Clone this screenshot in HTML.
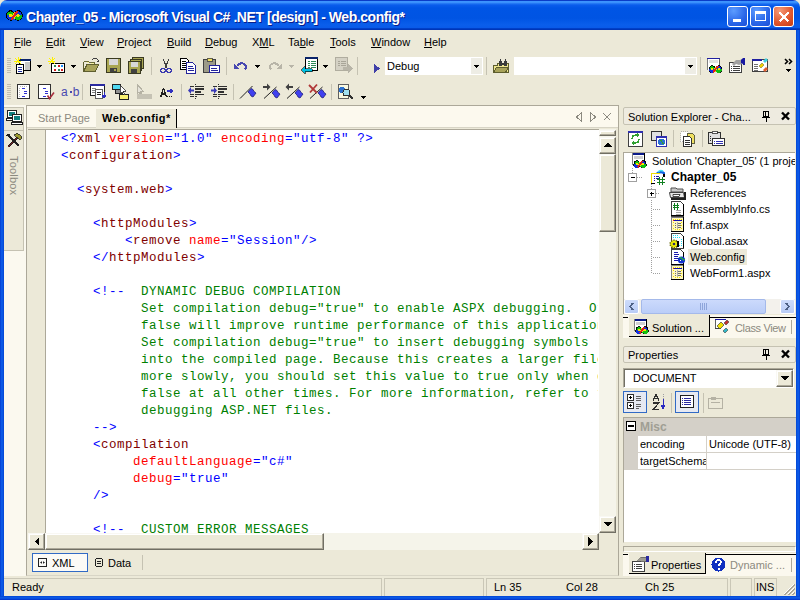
<!DOCTYPE html>
<html><head><meta charset="utf-8">
<style>
*{margin:0;padding:0;box-sizing:border-box}
html,body{width:800px;height:600px;overflow:hidden;background:#ECE9D8;font-family:"Liberation Sans",sans-serif;font-size:11px;color:#000}
.a{position:absolute}
svg *{shape-rendering:crispEdges}
.t{position:absolute;white-space:nowrap;line-height:13px}
u{text-decoration:underline;text-underline-offset:1px;text-decoration-thickness:1px}
#title{left:0;top:0;width:800px;height:30px;border-radius:7px 7px 0 0;background:linear-gradient(#0A3CC8 0px,#0A3CC8 1px,#3D95FF 1px,#3A90FC 2.5px,#2478F4 3.5px,#0A5CEC 5px,#0055E5 8px,#0054E3 18px,#0A5EEB 25px,#0A5AE8 28px,#0040C8 28.5px,#0030B0 30px)}
.frameL{left:0;top:30px;width:4px;height:570px;background:linear-gradient(90deg,#0030C8 0,#0B5AE8 1px,#0A56E2 3px,#0040D0 4px)}
.frameR{left:796px;top:30px;width:4px;height:570px;background:linear-gradient(90deg,#0040D0 0,#0A56E2 1px,#0B5AE8 3px,#0030C8 4px)}
.frameB{left:0;top:596px;width:800px;height:4px;background:linear-gradient(#0040D0 0,#0A56E2 1px,#0B5AE8 2px,#0030C8 4px)}
.tb{position:absolute;top:6px;width:21px;height:21px;border:1px solid #fff;border-radius:3px}
.code{font-family:"Liberation Mono",monospace;font-size:12.5px;letter-spacing:0.5px;line-height:17px;white-space:pre;color:#000}
.tg{color:#800000}.bl{color:#0000FF}.at{color:#FF0000}.cm{color:#008000}
.grip{position:absolute;width:4px;background:repeating-linear-gradient(#C1BEB0 0 1px,transparent 1px 2px)}
.sep{position:absolute;width:1px;background:#C5C2B2}
.btn3d{position:absolute;background:#ECE9D8;border:1px solid;border-color:#F9F8F3 #716F64 #716F64 #F9F8F3;box-shadow:inset -1px -1px 0 #ACA899,inset 1px 1px 0 #fff}
</style></head><body>

<svg width="0" height="0" style="position:absolute"><defs>
<g id="vslogo" style="shape-rendering:auto">
<ellipse cx="3.8" cy="4.2" rx="3.3" ry="3.6" fill="#10C010" stroke="#000" stroke-width="0.9"/><path d="M0.5 4.2a3.3 3.6 0 0 0 6.6 0z" fill="#1030E0"/>
<ellipse cx="10.2" cy="4.2" rx="3.3" ry="3.6" fill="#1030E0" stroke="#000" stroke-width="0.9"/><path d="M6.9 4.2a3.3 3.6 0 0 0 6.6 0z" fill="#10C010"/>
<path d="M5 4.2l2-2.5 2 2.5-2 2.5z" fill="#F8E000"/><circle cx="3.8" cy="4.2" r="1.2" fill="#F8E000"/><circle cx="10.2" cy="4.2" r="1.2" fill="#F8E000"/>
<path d="M4.5 7.5l5-6.5" stroke="#E02020" stroke-width="1.8"/>
</g></defs></svg>
<!-- window frame -->
<div class="a" id="title"></div>
<svg class="a" style="left:6px;top:9px" width="17" height="13" viewBox="0 0 17 13"><use href="#vslogo" transform="translate(0,1) scale(1.2,1.3)"/></svg>
<div class="t" style="left:26px;top:10px;font-size:14px;line-height:15px;font-weight:bold;color:#fff;letter-spacing:-0.45px;text-shadow:1px 1px 0 #0A1E8C">Chapter_05 - Microsoft Visual C# .NET [design] - Web.config*</div>
<div class="tb" style="left:727px;background:radial-gradient(circle at 30% 20%,#5C9CFF,#2A66E8 60%,#1B4FD8)"><div class="a" style="left:5px;top:12px;width:8px;height:3px;background:#fff"></div></div>
<div class="tb" style="left:750px;background:radial-gradient(circle at 30% 20%,#5C9CFF,#2A66E8 60%,#1B4FD8)"><div class="a" style="left:4px;top:4px;width:11px;height:10px;border:1px solid #fff;border-top-width:3px"></div></div>
<div class="tb" style="left:773px;background:radial-gradient(circle at 30% 20%,#F59A78,#E0552C 60%,#C63C12)"><svg class="a" style="left:4px;top:4px" width="12" height="12"><path d="M1.5 1.5L10.5 10.5M10.5 1.5L1.5 10.5" stroke="#fff" stroke-width="2"/></svg></div>

<div class="a frameL"></div><div class="a frameR"></div><div class="a frameB"></div>


<!-- menu -->
<div class="t" style="left:14px;top:36px"><u>F</u>ile</div>
<div class="t" style="left:46px;top:36px"><u>E</u>dit</div>
<div class="t" style="left:80px;top:36px"><u>V</u>iew</div>
<div class="t" style="left:117px;top:36px"><u>P</u>roject</div>
<div class="t" style="left:167px;top:36px"><u>B</u>uild</div>
<div class="t" style="left:205px;top:36px"><u>D</u>ebug</div>
<div class="t" style="left:252px;top:36px">X<u>M</u>L</div>
<div class="t" style="left:288px;top:36px">Ta<u>b</u>le</div>
<div class="t" style="left:330px;top:36px"><u>T</u>ools</div>
<div class="t" style="left:371px;top:36px"><u>W</u>indow</div>
<div class="t" style="left:424px;top:36px"><u>H</u>elp</div>

<!-- toolbar 1 -->
<div class="grip" style="left:7px;top:58px;height:15px"></div>
<svg class="a" style="left:14px;top:57px" width="18" height="18" viewBox="0 0 18 18">
<rect x="5.5" y="2.5" width="11" height="11" fill="#fff" stroke="#000"/><rect x="5" y="2" width="12" height="2" fill="#0A246A"/><rect x="11" y="5" width="5" height="8" fill="#C8C8C8"/>
<rect x="2.5" y="7.5" width="7" height="9" fill="#fff" stroke="#000"/><path d="M4 10h4M4 12h4M4 14h4" stroke="#2030A0"/>
<path d="M1 1l6 6M4 0v6M0 4h7M1 7l6-6" stroke="#FFF200" stroke-width="1"/>
</svg>
<svg class="a" style="left:37px;top:65px" width="6" height="3"><path d="M0 0h5l-2.5 3z" fill="#000"/></svg>
<svg class="a" style="left:48px;top:57px" width="18" height="18" viewBox="0 0 18 18">
<rect x="3.5" y="6.5" width="13" height="9" fill="#fff" stroke="#000"/><rect x="4" y="15" width="13" height="1" fill="#000"/>
<rect x="6" y="8" width="2" height="2" fill="#2E8B57"/><rect x="10" y="8" width="2" height="2" fill="#D02020"/><rect x="13" y="8" width="2" height="2" fill="#1E90FF"/>
<rect x="6" y="12" width="2" height="2" fill="#D02020"/><rect x="10" y="12" width="2" height="2" fill="#2E8B57"/><rect x="13" y="12" width="2" height="2" fill="#D02020"/>
<path d="M1 1l6 6M4 0v6M0 4h7M1 7l6-6" stroke="#FFF200" stroke-width="1"/>
</svg>
<svg class="a" style="left:71px;top:65px" width="6" height="3"><path d="M0 0h5l-2.5 3z" fill="#000"/></svg>
<svg class="a" style="left:82px;top:57px" width="18" height="16" viewBox="0 0 18 16">
<path d="M1.5 4.5h5l1 1h5v2" fill="#F6F0A0" stroke="#6B6B3A"/><path d="M1.5 4.5v10h12l3-7h-12l-3 7" fill="#EDE58E" stroke="#5E5E2E"/><path d="M2 14.5l3-7h11.5l-3 7z" fill="#A8A35A" stroke="#5E5E2E"/>
<path d="M10 3q3-3 6 0l0 2" stroke="#404040" fill="none"/><path d="M14.5 4h3l-1.5 2z" fill="#404040"/>
</svg>
<svg class="a" style="left:106px;top:58px" width="16" height="16" viewBox="0 0 16 16">
<rect x="0.5" y="0.5" width="14" height="14" fill="#A9A652" stroke="#3A3A20"/><rect x="3" y="1" width="9" height="6" fill="#D8D8D8"/><rect x="4" y="10" width="7" height="4" fill="#404040"/><rect x="8" y="11" width="2" height="2" fill="#A9A652"/>
</svg>
<svg class="a" style="left:128px;top:57px" width="17" height="17" viewBox="0 0 17 17">
<rect x="4.5" y="0.5" width="11" height="11" fill="#A9A652" stroke="#3A3A20"/><rect x="2.5" y="2.5" width="11" height="11" fill="#A9A652" stroke="#3A3A20"/>
<rect x="0.5" y="4.5" width="12" height="12" fill="#A9A652" stroke="#3A3A20"/><rect x="3" y="5" width="7" height="5" fill="#D8D8D8"/><rect x="3" y="12" width="6" height="4" fill="#404040"/>
</svg>
<div class="sep" style="left:151px;top:57px;height:18px"></div>
<svg class="a" style="left:160px;top:58px" width="12" height="16" viewBox="0 0 12 16">
<path d="M3 1l4 9M9 1l-4 9" stroke="#404040"/><circle cx="3" cy="12.5" r="2.2" fill="none" stroke="#3A3AB0" stroke-width="1.3"/><circle cx="9" cy="12.5" r="2.2" fill="none" stroke="#3A3AB0" stroke-width="1.3"/>
</svg>
<svg class="a" style="left:180px;top:58px" width="17" height="16" viewBox="0 0 17 16">
<path d="M0.5 0.5h6l2 2v9h-8z" fill="#fff" stroke="#000"/><path d="M2 3h4M2 5h5M2 7h5M2 9h5" stroke="#000"/>
<path d="M6.5 4.5h6l3 3v8h-9z" fill="#fff" stroke="#24249A"/><path d="M8 8h5M8 10h6M8 12h6" stroke="#24249A"/>
</svg>
<svg class="a" style="left:203px;top:57px" width="18" height="17" viewBox="0 0 18 17">
<rect x="0.5" y="2.5" width="12" height="13" rx="1" fill="#9C9A88" stroke="#404040"/><rect x="4" y="1" width="5" height="3" fill="#F0E060" stroke="#404040" stroke-width="0.8"/>
<rect x="6.5" y="8.5" width="10" height="7" fill="#fff" stroke="#24249A"/><path d="M8 11h6M8 13h7" stroke="#24249A"/>
</svg>
<div class="sep" style="left:226px;top:57px;height:18px"></div>
<svg class="a" style="left:234px;top:61px" width="14" height="10" viewBox="0 0 14 10">
<path d="M3 4.5q4-4 8-1q2 2 0 5" stroke="#4848B0" stroke-width="2" fill="none"/><path d="M0 2v6h5z" fill="#4848B0"/>
</svg>
<svg class="a" style="left:255px;top:65px" width="6" height="3"><path d="M0 0h5l-2.5 3z" fill="#000"/></svg>
<svg class="a" style="left:268px;top:61px" width="14" height="10" viewBox="0 0 14 10">
<path d="M11 4.5q-4-4-8-1q-2 2 0 5" stroke="#B8B5A8" stroke-width="2" fill="none"/><path d="M14 2v6h-5z" fill="#B8B5A8"/>
</svg>
<svg class="a" style="left:289px;top:65px" width="6" height="3"><path d="M0 0h5l-2.5 3z" fill="#B8B5A8"/></svg>
<svg class="a" style="left:300px;top:57px" width="18" height="17" viewBox="0 0 18 17">
<rect x="5.5" y="0.5" width="12" height="13" fill="#fff" stroke="#000"/><rect x="5" y="0" width="13" height="2" fill="#0A246A"/>
<path d="M8 4h2M11 4h5M8 6h2M11 6h5M8 8h2M11 8h5M8 10h2M11 10h5" stroke="#2E8B57"/>
<path d="M1 13l4-4v2.5h7v3h-7v2.5z" fill="#00C0E0" stroke="#000" stroke-width="0.6"/>
</svg>
<svg class="a" style="left:323px;top:65px" width="6" height="3"><path d="M0 0h5l-2.5 3z" fill="#000"/></svg>
<svg class="a" style="left:335px;top:57px" width="18" height="17" viewBox="0 0 18 17">
<rect x="0.5" y="0.5" width="12" height="13" fill="#D4D1C4" stroke="#B0AD9F"/><path d="M3 4h2M6 4h5M3 6h2M6 6h5M3 8h2M6 8h5" stroke="#A8A598"/>
<path d="M8 10h5v-3l5 4.5l-5 4.5v-3h-5z" fill="#B8B5A8"/>
</svg>
<div class="sep" style="left:357px;top:57px;height:18px"></div>
<svg class="a" style="left:374px;top:64px" width="6" height="10"><path d="M0 0l6 4.5l-6 4.5z" fill="#4040A8"/></svg>
<div class="a" style="left:385px;top:57px;width:98px;height:18px;background:#fff"></div>
<div class="a" style="left:471px;top:58px;width:11px;height:16px;background:#EEEDE5"></div>
<svg class="a" style="left:474px;top:65px" width="6" height="3"><path d="M0 0h5l-2.5 3z" fill="#000"/></svg>
<div class="t" style="left:387px;top:60px">Debug</div>
<div class="sep" style="left:486px;top:57px;height:18px"></div>
<svg class="a" style="left:492px;top:58px" width="18" height="16" viewBox="0 0 18 16">
<path d="M1.5 7.5h4v-2h11v9h-15z" fill="#EDE58E" stroke="#5E5E2E"/><path d="M1.5 14.5l3-5h12l-3 5z" fill="#A8A35A" stroke="#5E5E2E"/>
<rect x="7" y="3" width="3" height="5" fill="#3A3A3A"/><rect x="12" y="3" width="3" height="5" fill="#3A3A3A"/><rect x="8" y="1" width="1" height="2" fill="#3A3A3A"/><rect x="13" y="1" width="1" height="2" fill="#3A3A3A"/><rect x="10" y="5" width="2" height="2" fill="#3A3A3A"/>
</svg>
<div class="a" style="left:514px;top:57px;width:183px;height:18px;background:#fff"></div>
<div class="a" style="left:685px;top:58px;width:11px;height:16px;background:#EEEDE5"></div>
<svg class="a" style="left:688px;top:65px" width="6" height="3"><path d="M0 0h5l-2.5 3z" fill="#000"/></svg>
<div class="sep" style="left:700px;top:57px;height:18px"></div>
<svg class="a" style="left:707px;top:58px" width="17" height="16" viewBox="0 0 17 16">
<rect x="0" y="0" width="13" height="12" fill="#fff"/><rect x="0" y="0" width="13" height="1" fill="#2020A0"/><rect x="0" y="1" width="1" height="11" fill="#808080"/><rect x="12" y="1" width="1" height="8" fill="#606060"/><rect x="2" y="2" width="9" height="3" fill="#E0E0E0"/>
<use href="#vslogo" x="1.5" y="7"/>
</svg>
<svg class="a" style="left:729px;top:57px" width="17" height="17" viewBox="0 0 17 17">
<rect x="0.5" y="5.5" width="12" height="10" fill="#fff" stroke="#404040"/><path d="M2 9h1M4 9h7M2 11h1M4 11h7M2 13h1M4 13h7" stroke="#404040"/>
<path d="M3 7l4-4h4l2-1v5l-3 1-3-1-2 2z" fill="#A0A0A0" style="shape-rendering:auto"/><rect x="14" y="1" width="2" height="7" fill="#1818A0"/><path d="M12 3l2-2v6l-2-1z" fill="#1818A0" style="shape-rendering:auto"/>
</svg>
<svg class="a" style="left:752px;top:57px" width="18" height="17" viewBox="0 0 18 17">
<rect x="0.5" y="2.5" width="15" height="12" fill="#fff" stroke="#404040"/><rect x="0" y="2" width="10" height="2" fill="#2020A0"/>
<path d="M2 7h4M2 9h4M2 11h4M2 13h4" stroke="#707070"/>
<path d="M7 9l3-3 2 2-3 3z" fill="#F0D000" stroke="#606030" stroke-width="0.5" style="shape-rendering:auto"/><path d="M11 4l3-3 2 2-3 3z" fill="#40D0E0" style="shape-rendering:auto"/><path d="M11 13l3-3 2 2-3 3z" fill="#E06030" style="shape-rendering:auto"/>
</svg>
<svg class="a" style="left:784px;top:58px" width="9" height="15" viewBox="0 0 9 15">
<path d="M1 1l2.5 2.5-2.5 2.5M5 1l2.5 2.5-2.5 2.5" stroke="#000" stroke-width="1.6" fill="none" style="shape-rendering:auto"/><path d="M1.5 11h6l-3 3z" fill="#000"/>
</svg>
<!-- toolbar 2 -->
<div class="grip" style="left:7px;top:84px;height:15px"></div>
<svg class="a" style="left:17px;top:84px" width="14" height="15" viewBox="0 0 14 15">
<rect x="0.5" y="0.5" width="12" height="14" fill="#fff" stroke="#303030"/>
<path d="M3 2.5h1M5 2.5h1M7 2.5h1M9 2.5h1M2.5 4v1M2.5 6v1M2.5 8v1M2.5 10v1M2.5 12v1" stroke="#B8B8B8"/>
<rect x="5" y="4" width="3" height="1" fill="#3030D0"/><rect x="7" y="7" width="3" height="1" fill="#3030D0"/><rect x="7" y="9" width="3" height="1" fill="#3030D0"/><rect x="5" y="12" width="3" height="1" fill="#3030D0"/>
</svg>
<svg class="a" style="left:38px;top:84px" width="17" height="16" viewBox="0 0 17 16">
<rect x="0.5" y="0.5" width="12" height="14" fill="#fff" stroke="#303030"/>
<rect x="5" y="4" width="3" height="1" fill="#3030D0"/><rect x="7" y="7" width="3" height="1" fill="#3030D0"/><rect x="7" y="9" width="3" height="1" fill="#3030D0"/><rect x="5" y="12" width="3" height="1" fill="#3030D0"/>
<path d="M9.5 11.5l2 3l4.5-6" stroke="#A83040" stroke-width="1.6" fill="none" style="shape-rendering:auto"/>
</svg>
<div class="t" style="left:61px;top:86px;font-size:12px;line-height:13px;color:#4848B0">a<span style="display:inline-block;width:2px;height:2px;background:#4848B0;margin:0 1px 0 2px;position:relative;top:-3px"></span>b</div>
<div class="sep" style="left:82px;top:84px;height:16px"></div>
<svg class="a" style="left:90px;top:84px" width="17" height="16" viewBox="0 0 17 16">
<rect x="0.5" y="0.5" width="14" height="11" fill="#fff" stroke="#202020"/><rect x="0" y="0" width="15" height="2" fill="#2A2AA0"/><path d="M2 4h4M2 6h3M2 8h3" stroke="#808080"/>
<rect x="5.5" y="5.5" width="7" height="9" fill="#fff" stroke="#606060"/><path d="M7 8h4M7 10h4" stroke="#202020"/>
<path d="M14 8v5M12 11l2 3l2-3z" stroke="#2A2AC0" fill="#2A2AC0"/>
</svg>
<svg class="a" style="left:112px;top:84px" width="18" height="16" viewBox="0 0 18 16">
<rect x="0.5" y="0.5" width="8" height="5" fill="#50D8F0" stroke="#202020"/><rect x="3.5" y="5.5" width="8" height="4" fill="#909090" stroke="#202020"/>
<rect x="7.5" y="10.5" width="9" height="5" fill="#F8F070" stroke="#202020"/><path d="M8 1v9l2-2 2 3 1-1-2-3h3z" fill="#fff" stroke="#202020" stroke-width="0.8"/>
</svg>
<svg class="a" style="left:136px;top:84px" width="17" height="15" viewBox="0 0 17 15">
<path d="M1 0v10l2-2 2 3 1-1-2-3h3z" fill="#E6E4DA" stroke="#B5B2A4"/><rect x="1" y="10" width="15" height="5" fill="#C5C2B4"/>
</svg>
<svg class="a" style="left:159px;top:88px" width="15" height="9" viewBox="0 0 15 9">
<path d="M0.5 8.5h2M6.5 8.5h2M1.5 8.5l3-8l3 8M2.5 6h4" stroke="#202020" stroke-width="1.3" fill="none"/><path d="M8 3h5M11 1l2.5 2l-2.5 2" stroke="#3030C0" stroke-width="1.3" fill="none"/><path d="M10 8h1M12 8h1" stroke="#202020"/>
</svg>
<div class="sep" style="left:181px;top:84px;height:16px"></div>
<svg class="a" style="left:186px;top:82px" width="20" height="18" viewBox="0 0 20 18" fill="#303030">
<rect x="9" y="2" width="1" height="1"/><rect x="4" y="4" width="4" height="1"/><rect x="9" y="4" width="9" height="1"/><rect x="9" y="6" width="9" height="2"/><rect x="9" y="9" width="6" height="2"/>
<rect x="4" y="12" width="4" height="1"/><rect x="9" y="12" width="9" height="1"/><rect x="4" y="14" width="4" height="1"/><rect x="9" y="14" width="2" height="1"/><rect x="9" y="16" width="1" height="1"/>
<path d="M2 8.5l3-3.5v2.5h3v2h-3v2.5z" fill="#3A3AB8" style="shape-rendering:auto"/>
</svg>
<svg class="a" style="left:209px;top:82px" width="20" height="18" viewBox="0 0 20 18" fill="#303030">
<rect x="9" y="2" width="1" height="1"/><rect x="4" y="4" width="4" height="1"/><rect x="9" y="4" width="9" height="1"/><rect x="9" y="6" width="9" height="2"/><rect x="9" y="9" width="6" height="2"/>
<rect x="4" y="12" width="4" height="1"/><rect x="9" y="12" width="9" height="1"/><rect x="4" y="14" width="4" height="1"/><rect x="9" y="14" width="2" height="1"/><rect x="9" y="16" width="1" height="1"/>
<path d="M8 8.5l-3-3.5v2.5h-3v2h3v2.5z" fill="#3A3AB8" style="shape-rendering:auto"/>
</svg>
<div class="sep" style="left:233px;top:84px;height:16px"></div>
<svg class="a" style="left:238px;top:82px" width="20" height="18" viewBox="0 0 20 18" style="shape-rendering:auto">
<path d="M2 16.5L14.5 4" stroke="#202020" stroke-width="1" style="shape-rendering:auto"/>
<path d="M10 10l3-3.5 2 1 1 2 2 1.5-3 4-2-1-1-2z" fill="#4040F0" stroke="#20207A" stroke-width="0.8" style="shape-rendering:auto"/>
</svg>
<svg class="a" style="left:261px;top:82px" width="20" height="18" viewBox="0 0 20 18">
<path d="M3 16.5L15.5 5" stroke="#202020" stroke-width="1" style="shape-rendering:auto"/>
<path d="M11 11l3-3.5 2 1 1 2 2 1.5-3 4-2-1-1-2z" fill="#4040F0" stroke="#20207A" stroke-width="0.8" style="shape-rendering:auto"/>
<path d="M2 4h4v-2.5l3.5 3.5-3.5 3.5v-2.5h-4z" fill="#404040" style="shape-rendering:auto"/>
</svg>
<svg class="a" style="left:284px;top:82px" width="20" height="18" viewBox="0 0 20 18">
<path d="M3 16.5L15.5 5" stroke="#202020" stroke-width="1" style="shape-rendering:auto"/>
<path d="M11 11l3-3.5 2 1 1 2 2 1.5-3 4-2-1-1-2z" fill="#4040F0" stroke="#20207A" stroke-width="0.8" style="shape-rendering:auto"/>
<path d="M9 4h-4v-2.5l-3.5 3.5 3.5 3.5v-2.5h4z" fill="#404040" style="shape-rendering:auto"/>
</svg>
<svg class="a" style="left:307px;top:82px" width="20" height="18" viewBox="0 0 20 18">
<path d="M3 16.5L15.5 5" stroke="#202020" stroke-width="1" style="shape-rendering:auto"/>
<path d="M11 11l3-3.5 2 1 1 2 2 1.5-3 4-2-1-1-2z" fill="#4040F0" stroke="#20207A" stroke-width="0.8" style="shape-rendering:auto"/>
<path d="M2 3l8 8M10 2.5l-7 8" stroke="#B03838" stroke-width="1.8" style="shape-rendering:auto"/>
</svg>
<div class="sep" style="left:331px;top:84px;height:16px"></div>
<svg class="a" style="left:338px;top:84px" width="17" height="16" viewBox="0 0 17 16">
<rect x="0.5" y="0.5" width="10" height="14" fill="#F8F8E0" stroke="#606060"/><circle cx="4" cy="6" r="3" fill="#2A70D0"/><circle cx="8.5" cy="8.5" r="3.5" fill="#A0E0F0" stroke="#303030"/><path d="M11 11l4 4" stroke="#303030" stroke-width="2"/>
</svg>
<svg class="a" style="left:361px;top:96px" width="6" height="3"><path d="M0 0h5l-2.5 3z" fill="#000"/></svg>

<!-- left toolbox strip -->
<div class="a" style="left:4px;top:105px;width:22px;height:471px;background:#FBF9EF"></div>
<div class="a" style="left:4px;top:107px;width:20px;height:24px;background:#ECE9D8;border-top:1px solid #C5C2B2;border-right:1px solid #C5C2B2"></div>
<div class="a" style="left:4px;top:130px;width:20px;height:121px;background:#ECE9D8;border-top:1px solid #C5C2B2;border-right:1px solid #C5C2B2;border-bottom:1px solid #C5C2B2"></div>
<svg class="a" style="left:6px;top:110px" width="17" height="15" viewBox="0 0 17 15">
<rect x="1.5" y="0.5" width="9" height="7" fill="#fff" stroke="#202020"/><rect x="3" y="2" width="6" height="4" fill="#108080"/><rect x="0.5" y="8.5" width="10" height="2" fill="#fff" stroke="#202020"/>
<rect x="6.5" y="4.5" width="9" height="7" fill="#fff" stroke="#202020"/><rect x="8" y="6" width="6" height="4" fill="#108080"/><rect x="5.5" y="12.5" width="11" height="2" fill="#fff" stroke="#202020"/>
</svg>
<svg class="a" style="left:6px;top:133px" width="16" height="15" viewBox="0 0 16 15">
<path d="M2 14l10-10" stroke="#202020" stroke-width="2.5"/><path d="M2 14l10-10" stroke="#802020" stroke-width="1"/><path d="M8 2l3-2 5 4-2 3z" fill="#9C9A30" stroke="#202020" stroke-width="0.8"/>
<path d="M3 3l10 10" stroke="#202020" stroke-width="2.2"/><path d="M0.5 2.5q2-3 4 -1l-2 2z" fill="#202020"/>
</svg>
<div class="a" style="left:20px;top:156px;transform-origin:0 0;transform:rotate(90deg);font-size:11px;line-height:12px;color:#8C8A80;white-space:nowrap;letter-spacing:0.2px">Toolbox</div>

<!-- editor panel -->
<div class="a" style="left:26px;top:105px;width:593px;height:471px;background:#ECE9D8;border:1px solid #ACA899;border-bottom-color:#D8D5C6"></div>
<div class="a" style="left:27px;top:106px;width:591px;height:22px;background:#FCF9EE"></div>
<div class="a" style="left:27px;top:127px;width:591px;height:1px;background:#D8D5C6"></div>
<div class="t" style="left:38px;top:112px;color:#8C8A80">Start Page</div>
<div class="a" style="left:96px;top:109px;width:81px;height:19px;background:#ECE9D8;border-right:1px solid #000"></div>
<div class="t" style="left:102px;top:112px;font-weight:bold;letter-spacing:0.5px">Web.config*</div>
<svg class="a" style="left:575px;top:112px" width="40" height="10" viewBox="0 0 40 10">
<path d="M6.5 0.5l-5 4.5 5 4.5z" fill="none" stroke="#8C8A80"/><path d="M15.5 0.5l5 4.5-5 4.5z" fill="none" stroke="#8C8A80"/><path d="M28.5 1.5l7 7M35.5 1.5l-7 7" stroke="#8C8A80" stroke-width="1.3"/>
</svg>
<!-- code area -->
<div class="a" style="left:28px;top:129px;width:571px;height:404px;background:#fff;border-top:1px solid #ACA899"></div>
<div class="a" style="left:28px;top:130px;width:18px;height:403px;background:#ECE9D8;border-right:1px solid #ACA899"></div>
<div class="a code" style="left:61px;top:131px;width:537px;height:403px;overflow:hidden"><span class="bl">&lt;?</span><span class="tg">xml</span> <span class="at">version</span><span class="bl">="1.0"</span> <span class="at">encoding</span><span class="bl">="utf-8"</span> <span class="bl">?&gt;</span>
<span class="bl">&lt;</span><span class="tg">configuration</span><span class="bl">&gt;</span>

  <span class="bl">&lt;</span><span class="tg">system.web</span><span class="bl">&gt;</span>

    <span class="bl">&lt;</span><span class="tg">httpModules</span><span class="bl">&gt;</span>
        <span class="bl">&lt;</span><span class="tg">remove</span> <span class="at">name</span><span class="bl">="Session"/&gt;</span>
    <span class="bl">&lt;/</span><span class="tg">httpModules</span><span class="bl">&gt;</span>

    <span class="bl">&lt;!--</span><span class="cm">  DYNAMIC DEBUG COMPILATION
          Set compilation debug="true" to enable ASPX debugging.  Otherwise, setting this value to
          false will improve runtime performance of this application. 
          Set compilation debug="true" to insert debugging symbols (.pdb information)
          into the compiled page. Because this creates a larger file that executes
          more slowly, you should set this value to true only when debugging and to
          false at all other times. For more information, refer to the documentation about
          debugging ASP.NET files.
    </span><span class="bl">--&gt;</span>
    <span class="bl">&lt;</span><span class="tg">compilation</span>
         <span class="at">defaultLanguage</span><span class="bl">="c#"</span>
         <span class="at">debug</span><span class="bl">="true"</span>
    <span class="bl">/&gt;</span>

    <span class="bl">&lt;!--</span><span class="cm">  CUSTOM ERROR MESSAGES</span></div>
<!-- vertical scrollbar -->
<div class="a" style="left:599px;top:129px;width:17px;height:404px;background:#F5F4EA"></div>
<div class="btn3d" style="left:599px;top:130px;width:17px;height:6px"></div>
<div class="btn3d" style="left:599px;top:137px;width:17px;height:17px"></div>
<svg class="a" style="left:603px;top:142px" width="9" height="5"><path d="M0 5h9l-4.5-4.5z" fill="#000"/></svg>
<div class="btn3d" style="left:599px;top:154px;width:17px;height:78px"></div>
<div class="btn3d" style="left:599px;top:516px;width:17px;height:17px"></div>
<svg class="a" style="left:603px;top:522px" width="9" height="5"><path d="M0 0h9l-4.5 4.5z" fill="#000"/></svg>
<!-- horizontal scrollbar -->
<div class="a" style="left:28px;top:533px;width:571px;height:17px;background:#F5F4EA"></div>
<div class="btn3d" style="left:28px;top:533px;width:17px;height:17px"></div>
<svg class="a" style="left:34px;top:537px" width="5" height="9"><path d="M5 0v9l-4.5-4.5z" fill="#000"/></svg>
<div class="btn3d" style="left:45px;top:533px;width:279px;height:17px"></div>
<div class="btn3d" style="left:582px;top:533px;width:17px;height:17px"></div>
<svg class="a" style="left:588px;top:537px" width="5" height="9"><path d="M0 0v9l4.5-4.5z" fill="#000"/></svg>
<div class="a" style="left:599px;top:533px;width:17px;height:17px;background:#ECE9D8"></div>
<!-- bottom tabs -->
<div class="a" style="left:32px;top:553px;width:56px;height:19px;background:#FBFAF6;border:1px solid #316AC5"></div>
<svg class="a" style="left:38px;top:558px" width="9" height="9"><rect x="0.5" y="0.5" width="8" height="8" fill="none" stroke="#202020"/><rect x="3" y="4" width="1" height="1" fill="#202020"/><rect x="2" y="4" width="1" height="1" fill="#707070"/><rect x="5" y="4" width="1" height="1" fill="#202020"/><rect x="6" y="4" width="1" height="1" fill="#707070"/><rect x="3" y="3" width="1" height="1" fill="#909090"/><rect x="3" y="5" width="1" height="1" fill="#909090"/><rect x="5" y="3" width="1" height="1" fill="#909090"/><rect x="5" y="5" width="1" height="1" fill="#909090"/></svg>
<div class="t" style="left:52px;top:557px">XML</div>
<svg class="a" style="left:95px;top:558px" width="8" height="9"><rect x="0.5" y="0.5" width="7" height="8" rx="2" fill="none" stroke="#202020"/><path d="M2 3h4M2 5h4" stroke="#202020"/></svg>
<div class="t" style="left:108px;top:557px">Data</div>
<div class="sep" style="left:142px;top:555px;height:15px"></div>

<!-- right panel: solution explorer -->
<div class="a" style="left:623px;top:107px;width:173px;height:18px;background:#EEEBE0;border:1px solid #C5C2B2;border-radius:2px"></div>
<div class="t" style="left:628px;top:111px">Solution Explorer - Cha...</div>
<svg class="a" style="left:761px;top:111px" width="30" height="11" viewBox="0 0 30 11">
<path d="M2.5 0.5h5v5h-5zM1 6h8M5 6v5" stroke="#000" fill="none"/><path d="M4 1v4" stroke="#000"/>
<path d="M21 1.5l7 7M28 1.5l-7 7" stroke="#000" stroke-width="2.4" style="shape-rendering:auto"/>
</svg>
<svg class="a" style="left:627px;top:130px" width="17" height="17" viewBox="0 0 17 17">
<rect x="1.5" y="1.5" width="14" height="15" fill="#fff" stroke="#404040"/><rect x="1" y="1" width="15" height="2" fill="#3030B0"/>
<path d="M5 9q0-4 4-4h2M10 3l2 2-2 2" stroke="#30A030" stroke-width="1.4" fill="none"/><path d="M12 9q0 4-4 4h-2M7 15l-2-2 2-2" stroke="#30A030" stroke-width="1.4" fill="none"/>
</svg>
<svg class="a" style="left:650px;top:130px" width="18" height="17" viewBox="0 0 18 17">
<rect x="1.5" y="1.5" width="10" height="9" fill="#E0E0E0" stroke="#303030"/><rect x="6.5" y="6.5" width="10" height="10" fill="#fff" stroke="#3030B0"/><rect x="6" y="6" width="11" height="2" fill="#3030B0"/>
<circle cx="11.5" cy="12" r="3.3" fill="#2A70D0"/><path d="M10 10.5q1.5 0 2 1.5t1.5 1" stroke="#30A030" stroke-width="1.3" fill="none"/>
</svg>
<div class="sep" style="left:673px;top:130px;height:17px"></div>
<svg class="a" style="left:679px;top:130px" width="17" height="17" viewBox="0 0 17 17">
<path d="M1.5 1.5h7v10h-7z" fill="#fff" stroke="#B0B0B0" stroke-dasharray="1 1"/><path d="M8.5 3.5h5l2 2v8h-7z" fill="#F0E060" stroke="#606040"/>
<path d="M4.5 6.5h6l2 2v8h-8z" fill="#fff" stroke="#303030"/><path d="M6 10h5M6 12h5M6 14h5" stroke="#303030"/>
</svg>
<div class="sep" style="left:702px;top:130px;height:17px"></div>
<svg class="a" style="left:708px;top:130px" width="17" height="17" viewBox="0 0 17 17">
<rect x="0.5" y="2.5" width="12" height="11" fill="#E0E0E0" stroke="#303030"/><rect x="4" y="1" width="5" height="2" fill="#fff" stroke="#303030" stroke-width="0.8"/><path d="M2 6h1M2 8h1M2 10h1" stroke="#303030"/>
<rect x="4.5" y="8.5" width="12" height="7" fill="#fff" stroke="#303030"/><path d="M6 11h1M8 11h7M6 13h1M8 13h7" stroke="#3030B0"/>
</svg>
<!-- tree -->
<div class="a" style="left:623px;top:152px;width:173px;height:162px;background:#fff;border:1px solid #ACA899;border-right-color:#ACA899"></div>
<svg class="a" style="left:624px;top:153px" width="80" height="130" viewBox="0 0 80 130">
<path d="M8.5 15v6M27.5 31v6M27.5 47v73M13 24h6M32 40h4M29 56h8M29 72h8M29 88h8M29 104h8M29 120h8" stroke="#A0A0A0" stroke-dasharray="1 1" fill="none"/>
<rect x="4.5" y="20.5" width="8" height="8" fill="#fff" stroke="#A0A0A0"/><path d="M6.5 24.5h4" stroke="#000"/>
<rect x="23.5" y="36.5" width="8" height="8" fill="#fff" stroke="#A0A0A0"/><path d="M25.5 40.5h4M27.5 38.5v4" stroke="#000"/>
</svg>
<svg class="a" style="left:631px;top:153px" width="17" height="16" viewBox="0 0 17 16">
<rect x="1" y="0" width="13" height="12" fill="#fff"/><rect x="1" y="0" width="13" height="2" fill="#0A1A8A"/><rect x="3" y="3" width="9" height="3" fill="#D0D0D0"/><rect x="1" y="0" width="1" height="12" fill="#808080"/><rect x="13" y="0" width="1" height="8" fill="#000"/>
<use href="#vslogo" x="2" y="7"/>
</svg>
<div class="a" style="left:652px;top:155px;width:143px;height:14px;overflow:hidden"><div class="t" style="left:0;top:0">Solution 'Chapter_05' (1 project)</div></div>
<div class="a" style="left:795px;top:152px;width:1px;height:162px;background:#ECE9D8"></div>
<svg class="a" style="left:651px;top:169px" width="14" height="16" viewBox="0 0 14 16">
<path d="M5 6.5a5 5 0 0 1 9-1" stroke="#1060E0" stroke-width="2.5" fill="none" style="shape-rendering:auto"/><path d="M7 3a4 4 0 0 1 5-1" stroke="#40E0F0" stroke-width="1.5" fill="none" style="shape-rendering:auto"/><path d="M13 5v3" stroke="#000" stroke-width="1.5"/>
<rect x="0" y="4" width="9" height="11" fill="#fff"/><rect x="0" y="4" width="9" height="1" fill="#F0E000"/><rect x="0" y="4" width="1" height="11" fill="#F0E000"/><rect x="0" y="14" width="4" height="1" fill="#000"/>
<rect x="3" y="7" width="1" height="1" fill="#2020A0"/><rect x="5" y="7" width="3" height="1" fill="#2020A0"/><rect x="3" y="9" width="1" height="1" fill="#2020A0"/><rect x="5" y="9" width="3" height="1" fill="#2020A0"/><rect x="3" y="11" width="1" height="1" fill="#2020A0"/>
<g fill="#108020"><rect x="8" y="8" width="1" height="8"/><rect x="11" y="8" width="1" height="8"/><rect x="6" y="10" width="8" height="1"/><rect x="6" y="13" width="8" height="1"/></g>
</svg>
<div class="t" style="left:671px;top:171px;font-weight:bold;font-size:12px">Chapter_05</div>
<svg class="a" style="left:669px;top:186px" width="17" height="14" viewBox="0 0 17 14">
<path d="M2 2h5l1 1h6v3H2z" fill="#C8C8C8" stroke="#505050" stroke-width="1" style="shape-rendering:auto"/><path d="M0.5 6.5h14l1 5h-14z" fill="#E8E8E8" stroke="#404040" style="shape-rendering:auto"/>
<path d="M4 8.5h7l-1 2h-6z" fill="#fff" stroke="#202020" stroke-width="0.8" style="shape-rendering:auto"/><rect x="2" y="12" width="15" height="2" fill="#202020"/><rect x="15" y="6" width="2" height="7" fill="#202020"/>
</svg>
<div class="t" style="left:690px;top:187px">References</div>
<svg class="a" style="left:671px;top:201px" width="14" height="16" viewBox="0 0 14 16">
<path d="M0.5 0.5h9l3 3v11.5h-12z" fill="#fff" stroke="#404040"/><rect x="0" y="14" width="13" height="1" fill="#000"/><rect x="12" y="3" width="1" height="12" fill="#000"/>
<g fill="#108020"><rect x="3" y="2" width="1" height="7"/><rect x="6" y="2" width="1" height="7"/><rect x="2" y="4" width="6" height="1"/><rect x="2" y="6" width="6" height="1"/></g><path d="M5 9h5M5 11h5M5 13h5" stroke="#A8A8A8"/>
</svg>
<div class="t" style="left:690px;top:203px">AssemblyInfo.cs</div>
<svg class="a" style="left:671px;top:217px" width="14" height="15" viewBox="0 0 14 15">
<rect x="0" y="0" width="13" height="15" fill="#000"/><rect x="0" y="0" width="12" height="14" fill="#808080"/><rect x="1" y="1" width="11" height="13" fill="#FFF8C0"/>
<path d="M2 2h1M4 2h1M6 2h1M8 2h1M10 2h1M2 5h1M2 8h1M2 11h1M10 5h1M10 8h1M10 11h1M4 12h1M6 12h1M8 12h1" stroke="#F0E000"/>
<rect x="2" y="3" width="9" height="1" fill="#1010B0"/><rect x="2" y="3" width="1" height="1" fill="#E02020"/><path d="M4 6h1M4 8h1M4 10h1M7 6h3M7 8h3M7 10h3" stroke="#707070"/><rect x="6" y="5" width="1" height="7" fill="#B0B0B0"/>
</svg>
<div class="t" style="left:690px;top:219px">fnf.aspx</div>
<svg class="a" style="left:669px;top:233px" width="16" height="16" viewBox="0 0 16 16">
<path d="M2.5 0.5h9l3 3v11.5h-12z" fill="#fff" stroke="#404040"/><rect x="14" y="3" width="1" height="12" fill="#000"/>
<path d="M4 2h1M6 2h1M8 2h1M4 4h1M6 4h1M8 4h1M10 4h1M12 6h1M12 8h1M12 10h1M12 12h1M10 12h1" stroke="#20D8F0"/>
<circle cx="5" cy="11" r="3.8" fill="#F0F000" stroke="#606000" stroke-width="1.6" stroke-dasharray="1.3 1.1" style="shape-rendering:auto"/><circle cx="5" cy="11" r="1.3" fill="#303060" style="shape-rendering:auto"/><path d="M9 8v6" stroke="#000" stroke-width="1.5"/>
</svg>
<div class="t" style="left:690px;top:235px">Global.asax</div>
<div class="a" style="left:688px;top:249px;width:59px;height:16px;background:#ECE9D8"></div>
<svg class="a" style="left:671px;top:249px" width="15" height="16" viewBox="0 0 15 16">
<path d="M0.5 0.5h9l3 3v11.5h-12z" fill="#fff" stroke="#404040"/><rect x="0" y="15" width="13" height="1" fill="#000"/><rect x="12" y="3" width="1" height="12" fill="#000"/>
<path d="M3 3h4M3 5h5M3 7h4M3 9h5M3 11h4" stroke="#1818B0"/>
<circle cx="10.5" cy="11" r="3.6" fill="#1030D0" style="shape-rendering:auto"/><path d="M8.5 9q2-1 3 1t2 0" stroke="#20B040" stroke-width="1.4" fill="none" style="shape-rendering:auto"/><rect x="9" y="11" width="1" height="1" fill="#fff"/>
</svg>
<div class="t" style="left:690px;top:251px">Web.config</div>
<svg class="a" style="left:671px;top:265px" width="14" height="15" viewBox="0 0 14 15">
<rect x="0" y="0" width="13" height="15" fill="#000"/><rect x="0" y="0" width="12" height="14" fill="#808080"/><rect x="1" y="1" width="11" height="13" fill="#FFF8C0"/>
<path d="M2 2h1M4 2h1M6 2h1M8 2h1M10 2h1M2 5h1M2 8h1M2 11h1M10 5h1M10 8h1M10 11h1M4 12h1M6 12h1M8 12h1" stroke="#F0E000"/>
<rect x="2" y="3" width="9" height="1" fill="#1010B0"/><rect x="2" y="3" width="1" height="1" fill="#E02020"/><path d="M4 6h1M4 8h1M4 10h1M7 6h3M7 8h3M7 10h3" stroke="#707070"/><rect x="6" y="5" width="1" height="7" fill="#B0B0B0"/>
</svg>
<div class="t" style="left:690px;top:267px">WebForm1.aspx</div>
<!-- xp scrollbar -->
<div class="a" style="left:624px;top:299px;width:171px;height:15px;background:#F3F1EC"></div>
<div class="a" style="left:624px;top:299px;width:15px;height:15px;border-radius:2px;background:linear-gradient(#CDDCFB,#B9CCF6);border:1px solid #fff"></div>
<svg class="a" style="left:628px;top:302px" width="7" height="9"><path d="M5 1l-3 3.5 3 3.5" stroke="#4D6185" stroke-width="1.8" fill="none"/></svg>
<div class="a" style="left:641px;top:299px;width:125px;height:15px;border-radius:2px;background:linear-gradient(#CCDAFC,#BACDF8);border:1px solid #A4B9EA"></div>
<svg class="a" style="left:700px;top:303px" width="8" height="7"><path d="M0.5 0v7M2.5 0v7M4.5 0v7M6.5 0v7" stroke="#8EA5DA"/></svg>
<div class="a" style="left:780px;top:299px;width:15px;height:15px;border-radius:2px;background:linear-gradient(#CDDCFB,#B9CCF6);border:1px solid #fff"></div>
<svg class="a" style="left:784px;top:302px" width="7" height="9"><path d="M2 1l3 3.5-3 3.5" stroke="#4D6185" stroke-width="1.8" fill="none"/></svg>
<!-- se tabs -->
<div class="a" style="left:623px;top:315px;width:173px;height:23px;background:#FBF8EE"></div>
<div class="a" style="left:623px;top:317px;width:5px;height:1px;background:#000"></div>
<div class="a" style="left:709px;top:317px;width:87px;height:1px;background:#000"></div>
<div class="a" style="left:629px;top:315px;width:81px;height:22px;background:#ECE9D8;border-right:1px solid #000;border-bottom:1px solid #000"></div>
<svg class="a" style="left:633px;top:319px" width="17" height="16" viewBox="0 0 17 16">
<rect x="1" y="0" width="13" height="12" fill="#fff"/><rect x="1" y="0" width="13" height="2" fill="#0A1A8A"/><rect x="3" y="3" width="9" height="3" fill="#D0D0D0"/><rect x="1" y="0" width="1" height="12" fill="#808080"/><rect x="13" y="0" width="1" height="8" fill="#000"/>
<use href="#vslogo" x="2" y="7"/>
</svg>
<div class="t" style="left:652px;top:322px">Solution ...</div>
<svg class="a" style="left:715px;top:319px" width="16" height="16" viewBox="0 0 16 16">
<rect x="0" y="0" width="11" height="10" fill="#fff"/><rect x="0" y="0" width="11" height="1" fill="#1818A0"/><rect x="0" y="1" width="1" height="9" fill="#606060"/><rect x="0" y="9" width="6" height="1" fill="#404040"/>
<path d="M2 7l4-4 3 3-4 4z" fill="#F0E000" stroke="#404040" stroke-width="0.7" style="shape-rendering:auto"/><path d="M9 4l3-3 2 2-3 3z" fill="#C03030" stroke="#404040" stroke-width="0.6" style="shape-rendering:auto"/><path d="M8 12l3-3 2 2-3 3z" fill="#30B8C8" stroke="#404040" stroke-width="0.6" style="shape-rendering:auto"/>
</svg>
<div class="t" style="left:735px;top:322px;color:#8C8A80;letter-spacing:-0.35px">Class View</div>
<div class="a" style="left:791px;top:320px;width:1px;height:14px;background:#ACA899"></div>

<!-- properties -->
<div class="a" style="left:623px;top:346px;width:173px;height:17px;background:#EEEBE0;border:1px solid #C5C2B2;border-radius:2px"></div>
<div class="t" style="left:628px;top:349px">Properties</div>
<svg class="a" style="left:761px;top:349px" width="30" height="11" viewBox="0 0 30 11">
<path d="M2.5 0.5h5v5h-5zM1 6h8M5 6v5" stroke="#000" fill="none"/><path d="M4 1v4" stroke="#000"/>
<path d="M21 1.5l7 7M28 1.5l-7 7" stroke="#000" stroke-width="2.4" style="shape-rendering:auto"/>
</svg>
<div class="a" style="left:623px;top:368px;width:171px;height:20px;background:#fff;border:1px solid;border-color:#ACA899 #FFF #FFF #ACA899;box-shadow:inset 1px 1px 0 #716F64"></div>
<div class="t" style="left:633px;top:372px">DOCUMENT</div>
<div class="btn3d" style="left:776px;top:370px;width:17px;height:17px"></div>
<svg class="a" style="left:780px;top:376px" width="9" height="5"><path d="M0 0h9l-4.5 4.5z" fill="#000"/></svg>
<div class="a" style="left:623px;top:391px;width:24px;height:22px;background:#E6E9F2;border:1px solid #316AC5"></div>
<svg class="a" style="left:627px;top:394px" width="16" height="16" viewBox="0 0 16 16">
<rect x="0.5" y="0.5" width="6" height="6" fill="#fff" stroke="#303030"/><path d="M2 3.5h3M3.5 2v3" stroke="#000"/><rect x="0.5" y="8.5" width="6" height="6" fill="#fff" stroke="#303030"/><path d="M2 11.5h3M3.5 10v3" stroke="#000"/>
<path d="M9 2h5M9 4h5M9 6h5M9 10h5M9 12h5M9 14h3" stroke="#606060"/>
</svg>
<svg class="a" style="left:652px;top:393px" width="16" height="18" viewBox="0 0 16 18">
<path d="M1 8l3-7 3 7M2 5.5h4M1 10h6l-6 6.5h6" stroke="#303030" stroke-width="1.2" fill="none"/><path d="M11 1v11" stroke="#A0A0A0" stroke-dasharray="1 1"/><path d="M11 6v8M9 12l2 4 2-4z" stroke="#2A2AC0" fill="#2A2AC0"/>
</svg>
<div class="sep" style="left:671px;top:393px;height:20px"></div>
<div class="a" style="left:675px;top:391px;width:24px;height:22px;background:#E6E9F2;border:1px solid #316AC5"></div>
<svg class="a" style="left:679px;top:394px" width="16" height="16" viewBox="0 0 16 16">
<rect x="1.5" y="1.5" width="13" height="12" fill="#fff" stroke="#202020"/><path d="M3 4h1M5 4h7M3 6h1M5 6h7M3 8h1M5 8h7M3 10h1M5 10h7" stroke="#2A2AA0"/>
</svg>
<div class="sep" style="left:703px;top:393px;height:20px"></div>
<svg class="a" style="left:708px;top:396px" width="16" height="14" viewBox="0 0 16 14">
<rect x="0.5" y="2.5" width="14" height="10" fill="none" stroke="#B5B2A4"/><path d="M3 1.5h4v2h-4z" fill="none" stroke="#B5B2A4"/><path d="M3 6h9" stroke="#B5B2A4"/>
</svg>
<!-- grid -->
<div class="a" style="left:623px;top:417px;width:173px;height:126px;background:#fff;border:1px solid #ACA899;border-right:none;border-bottom-color:#ECE9D8"></div>
<div class="a" style="left:624px;top:418px;width:172px;height:18px;background:#D4D0C8"></div>
<div class="a" style="left:624px;top:436px;width:14px;height:34px;background:#D4D0C8"></div>
<div class="a" style="left:626px;top:421px;width:10px;height:10px;border:1px solid #000;background:#fff"></div>
<div class="a" style="left:628px;top:425px;width:6px;height:2px;background:#000"></div>
<div class="t" style="left:640px;top:421px;font-weight:bold;color:#A09E94;font-size:12px">Misc</div>
<div class="a" style="left:638px;top:452px;width:158px;height:1px;background:#D4D0C8"></div>
<div class="a" style="left:638px;top:469px;width:158px;height:1px;background:#D4D0C8"></div>
<div class="a" style="left:706px;top:436px;width:1px;height:34px;background:#D4D0C8"></div>
<div class="t" style="left:640px;top:438px">encoding</div>
<div class="t" style="left:709px;top:438px">Unicode (UTF-8)</div>
<div class="a" style="left:640px;top:455px;width:66px;height:14px;overflow:hidden"><div class="t" style="left:0;top:0">targetSchema</div></div>
<!-- description pane -->
<div class="a" style="left:623px;top:546px;width:173px;height:6px;border:1px solid;border-color:#ACA899 #fff #fff #ACA899"></div>
<!-- props tabs -->
<div class="a" style="left:623px;top:553px;width:173px;height:23px;background:#FBF8EE"></div>
<div class="a" style="left:623px;top:554px;width:5px;height:1px;background:#000"></div>
<div class="a" style="left:705px;top:554px;width:91px;height:1px;background:#000"></div>
<div class="a" style="left:629px;top:553px;width:77px;height:21px;background:#ECE9D8;border-right:1px solid #000;border-bottom:1px solid #000"></div>
<svg class="a" style="left:632px;top:556px" width="17" height="16" viewBox="0 0 17 16">
<rect x="0.5" y="5.5" width="12" height="10" fill="#fff" stroke="#404040"/><path d="M2 8h1M4 8h6M2 10h1M4 10h6M2 12h1M4 12h6" stroke="#404040"/>
<path d="M5 5l4-4h5l2 2-3 3z" fill="#9C9A90" stroke="#505050" stroke-width="0.6"/><rect x="14" y="0" width="3" height="6" fill="#2A2AA0"/>
</svg>
<div class="t" style="left:651px;top:559px">Properties</div>
<svg class="a" style="left:711px;top:557px" width="15" height="15" viewBox="0 0 15 15"><circle cx="7.5" cy="7.5" r="7" fill="#1030C0"/><path d="M5 5.5q0-2.5 2.5-2.5t2.5 2.3q0 1.5-2 2.5v1.5" stroke="#fff" stroke-width="1.8" fill="none"/><rect x="6.5" y="10.5" width="2" height="2" fill="#fff"/></svg>
<div class="t" style="left:730px;top:559px;color:#8C8A80">Dynamic ...</div>
<div class="a" style="left:791px;top:558px;width:1px;height:14px;background:#ACA899"></div>
<!-- status bar -->
<div class="a" style="left:4px;top:576px;width:792px;height:20px;background:#ECE9D8"></div>
<div class="a" style="left:4px;top:578px;width:378px;height:18px;border:1px solid #CAC7B7;border-left:none;border-bottom:none"></div>
<div class="a" style="left:384px;top:578px;width:100px;height:18px;border:1px solid #CAC7B7;border-bottom:none"></div>
<div class="a" style="left:486px;top:578px;width:242px;height:18px;border:1px solid #CAC7B7;border-bottom:none"></div>
<div class="a" style="left:730px;top:578px;width:22px;height:18px;border:1px solid #CAC7B7;border-bottom:none"></div>
<div class="a" style="left:754px;top:578px;width:23px;height:18px;border:1px solid #CAC7B7;border-bottom:none"></div>
<div class="t" style="left:12px;top:581px">Ready</div>
<div class="t" style="left:494px;top:581px">Ln 35</div>
<div class="t" style="left:566px;top:581px">Col 28</div>
<div class="t" style="left:645px;top:581px">Ch 25</div>
<div class="t" style="left:756px;top:581px">INS</div>
<svg class="a" style="left:782px;top:582px" width="13" height="13" viewBox="0 0 13 13"><path d="M12 2L2 12M12 6L6 12M12 10L10 12" stroke="#fff" stroke-width="1"/><path d="M13 2.5L2.5 13M13 6.5L6.5 13M13 10.5L10.5 13" stroke="#ACA899" stroke-width="1"/></svg>
</body></html>
